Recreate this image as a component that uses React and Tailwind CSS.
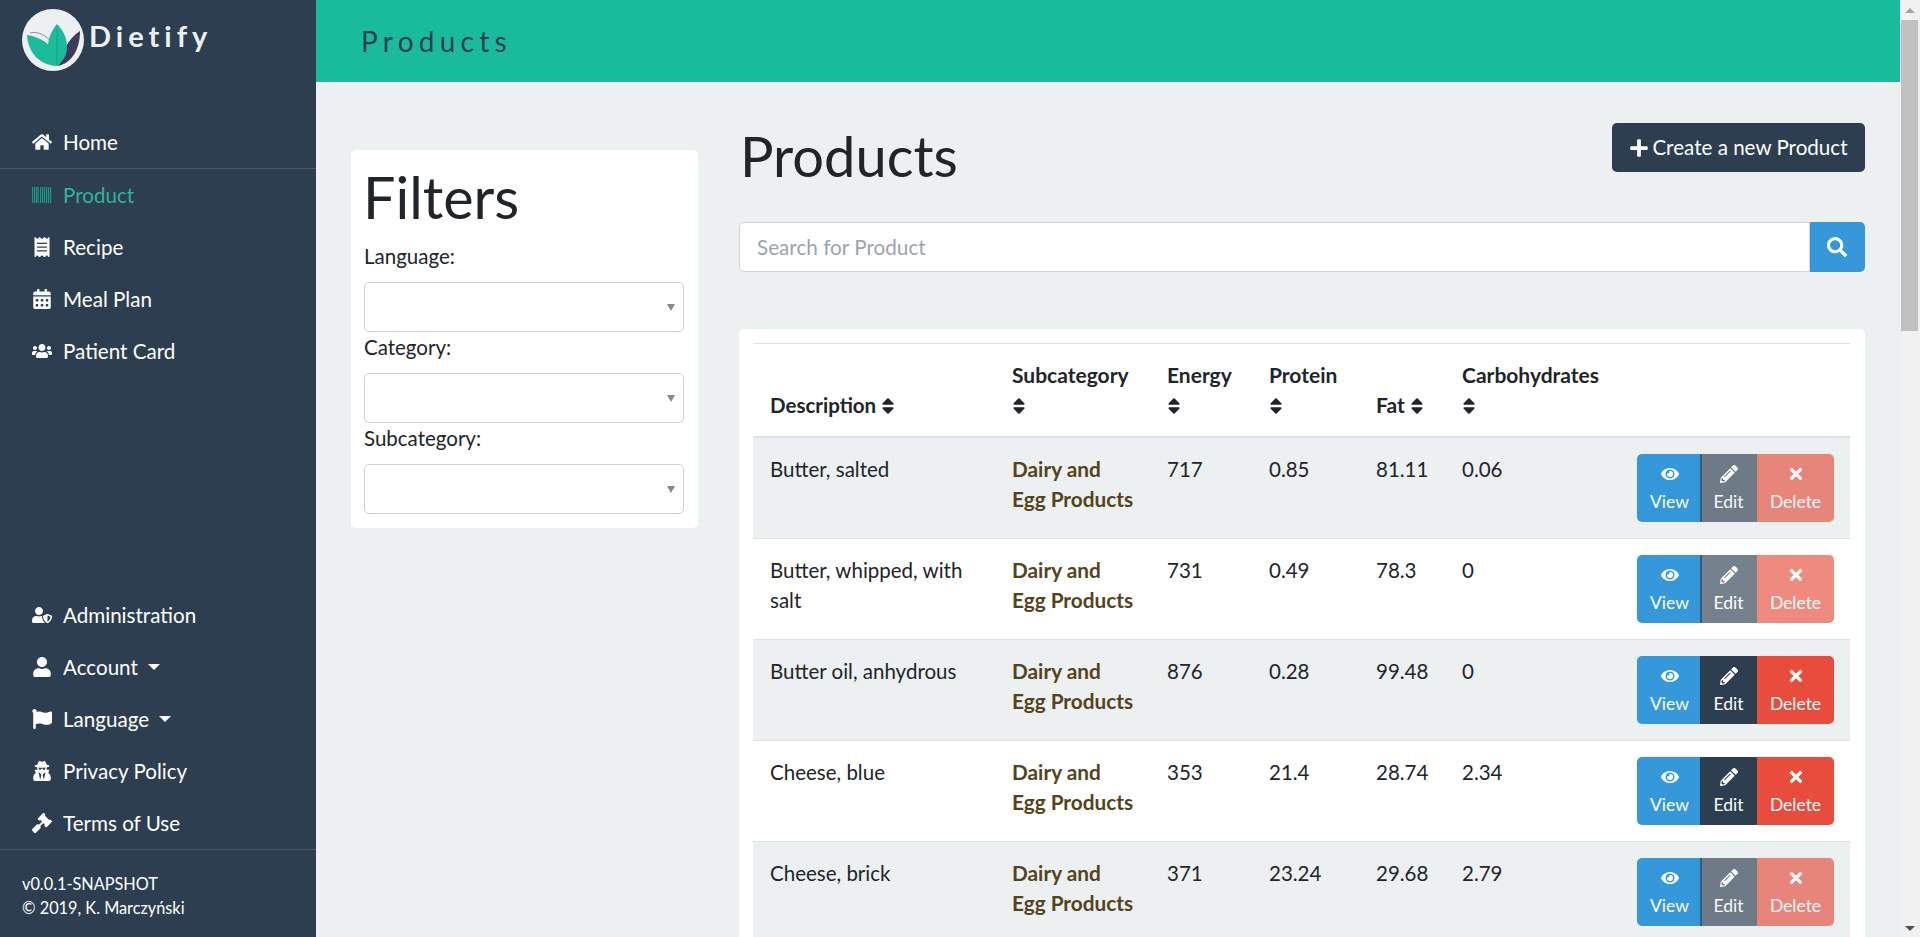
import {
  FaHome, FaReceipt, FaCalendarAlt, FaUsers, FaUserShield, FaUser, FaFlag, FaUserSecret, FaGavel,
  FaPlus, FaSearch, FaEye, FaPencilAlt, FaTimes, FaSort,
} from "react-icons/fa";

const rows = [
  { name: "Butter, salted", energy: "717", protein: "0.85", fat: "81.11", carbs: "0.06", disabled: true },
  { name: "Butter, whipped, with salt", energy: "731", protein: "0.49", fat: "78.3", carbs: "0", disabled: true },
  { name: "Butter oil, anhydrous", energy: "876", protein: "0.28", fat: "99.48", carbs: "0", disabled: false },
  { name: "Cheese, blue", energy: "353", protein: "21.4", fat: "28.74", carbs: "2.34", disabled: false },
  { name: "Cheese, brick", energy: "371", protein: "23.24", fat: "29.68", carbs: "2.79", disabled: true },
];

function Logo() {
  return (
    <svg viewBox="0 0 62 62" className="w-[62px] h-[62px] shrink-0">
      <circle cx="31" cy="31" r="31" fill="#ecf0f1" />
      <path d="M58 22C58 40 50 54 36 57C42 40 46 30 58 22Z" fill="#3e3a58" />
      <path d="M8 24C16 22 24 26 30 34" fill="none" stroke="#7a7a80" strokeWidth="0.8" />
      <path d="M5 26C14 27 24 32 28 38L34 57C18 56 6 44 5 26Z" fill="#1abc9c" />
      <path d="M35 15C42 22 45 30 45 38C45 47 40 53 35 57C29 53 26 46 26 37C26 29 30 21 35 15Z" fill="#1abc9c" />
      <path d="M35 20V57" stroke="#129a80" strokeWidth="0.8" />
    </svg>
  );
}

function Stripes() {
  const bars = [0, 2, 4, 5.5, 8, 10, 12, 14, 16, 18];
  return (
    <svg viewBox="0 0 20 16" className="w-5 h-4 opacity-70">
      {bars.map((x) => (
        <rect key={x} x={x} y="0" width="1.2" height="16" fill="#18bc9c" />
      ))}
    </svg>
  );
}

function NavItem({ icon: Icon, children, caret, active }) {
  return (
    <a className={`flex items-center h-[52px] pl-8 text-[20.6px] ${active ? "text-[#2fb49a]" : "text-white"}`}>
      <span className="w-[31px] shrink-0">{Icon ? <Icon className="h-5 w-auto" /> : <Stripes />}</span>
      <span>{children}</span>
      {caret && <span className="ml-[10px] w-0 h-0 border-x-[6px] border-x-transparent border-t-[6px] border-t-white" />}
    </a>
  );
}

function Sidebar() {
  return (
    <aside className="w-[316px] shrink-0 h-full bg-[#2c3e50] flex flex-col">
      <div className="h-[116px] pl-[22px] pt-[9px] flex items-start">
        <Logo />
        <span className="ml-[5px] mt-[9px] text-[29px] leading-[36px] font-bold tracking-[5px] text-[#ecf0f1]">Dietify</span>
      </div>
      <nav>
        <div className="border-b border-white/15">
          <NavItem icon={FaHome}>Home</NavItem>
        </div>
        <NavItem active>Product</NavItem>
        <NavItem icon={FaReceipt}>Recipe</NavItem>
        <NavItem icon={FaCalendarAlt}>Meal Plan</NavItem>
        <NavItem icon={FaUsers}>Patient Card</NavItem>
      </nav>
      <nav className="mt-auto border-b border-white/15">
        <NavItem icon={FaUserShield}>Administration</NavItem>
        <NavItem icon={FaUser} caret>Account</NavItem>
        <NavItem icon={FaFlag} caret>Language</NavItem>
        <NavItem icon={FaUserSecret}>Privacy Policy</NavItem>
        <NavItem icon={FaGavel}>Terms of Use</NavItem>
      </nav>
      <div className="h-[87px] pl-[22px] pt-[22px] text-[16.3px] leading-6 text-white">
        <div>v0.0.1-SNAPSHOT</div>
        <div>© 2019, K. Marczyński</div>
      </div>
    </aside>
  );
}

function FilterSelect({ label }) {
  return (
    <div>
      <label className="block h-[41px] leading-[30px]">{label}</label>
      <div className="h-[50px] border border-[#ced4da] rounded-[5px] bg-white flex items-center justify-end pr-[8px]">
        <span className="w-0 h-0 border-x-[4px] border-x-transparent border-t-[7px] border-t-[#888]" />
      </div>
    </div>
  );
}

function Filters() {
  return (
    <div className="w-[347px] shrink-0 mt-[68px] self-start bg-white rounded-[5px] pl-[13px] pr-[14px] pb-[14px] pt-[13px]">
      <h2 className="text-[57.5px] leading-[67px] mb-[11px] -ml-px">Filters</h2>
      <FilterSelect label="Language:" />
      <FilterSelect label="Category:" />
      <FilterSelect label="Subcategory:" />
    </div>
  );
}

function ActionButtons({ disabled }) {
  const dim = disabled ? "opacity-65" : "";
  const cell = "flex flex-col items-center pt-[11px] h-[68px] text-[17.5px] leading-[26px] text-white";
  return (
    <div className="flex justify-end">
      <a className={`${cell} w-[65px] bg-[#3498db] rounded-l-[5px]`}>
        <FaEye className="h-[18px] w-auto" />
        <span className="mt-[6px]">View</span>
      </a>
      <a className={`${cell} w-[57px] -ml-[2px] bg-[#2c3e50] ${dim}`}>
        <FaPencilAlt className="h-[18px] w-auto" />
        <span className="mt-[6px]">Edit</span>
      </a>
      <a className={`${cell} w-[77px] bg-[#e74c3c] rounded-r-[5px] ${dim}`}>
        <FaTimes className="h-[18px] w-auto" />
        <span className="mt-[6px]">Delete</span>
      </a>
    </div>
  );
}

function SortHead({ children, className = "text-[21px] px-4" }) {
  return (
    <th className={`py-4 align-bottom text-left font-bold border-t border-b-2 border-[#dee2e6] ${className}`}>
      {children} <FaSort className="inline h-5 w-auto align-[-3px] -ml-[3px]" />
    </th>
  );
}

function ProductTable() {
  return (
    <div className="mt-[57px] bg-white rounded-[5px] pl-[14px] pr-[15px] pt-[14px]">
      <table className="w-full table-fixed border-separate border-spacing-0 leading-[30px]">
        <colgroup>
          <col className="w-[243px]" />
          <col className="w-[155px]" />
          <col className="w-[102px]" />
          <col className="w-[107px]" />
          <col className="w-[86px]" />
          <col className="w-[175px]" />
          <col />
        </colgroup>
        <thead>
          <tr>
            <SortHead className="text-[20.5px] pl-[17px] pr-4">Description</SortHead>
            <SortHead>Subcategory</SortHead>
            <SortHead>Energy</SortHead>
            <SortHead>Protein</SortHead>
            <SortHead>Fat</SortHead>
            <SortHead>Carbohydrates</SortHead>
            <th className="border-t border-b-2 border-[#dee2e6]" />
          </tr>
        </thead>
        <tbody>
          {rows.map((row, i) => (
            <tr key={row.name} className={i % 2 === 0 ? "bg-[#ecf0f1]" : ""}>
              <td className="pl-[17px] pr-4 py-4 align-top border-b border-[#dee2e6]">{row.name}</td>
              <td className="px-4 py-4 align-top border-b border-[#dee2e6] text-[20.8px] font-bold text-[#54441a]">
                Dairy and<br />Egg Products
              </td>
              <td className="px-4 py-4 align-top border-b border-[#dee2e6]">{row.energy}</td>
              <td className="px-4 py-4 align-top border-b border-[#dee2e6]">{row.protein}</td>
              <td className="px-4 py-4 align-top border-b border-[#dee2e6]">{row.fat}</td>
              <td className="px-4 py-4 align-top border-b border-[#dee2e6]">{row.carbs}</td>
              <td className="px-4 py-4 align-top border-b border-[#dee2e6]">
                <ActionButtons disabled={row.disabled} />
              </td>
            </tr>
          ))}
        </tbody>
      </table>
    </div>
  );
}

function ProductsPanel() {
  return (
    <div className="w-[1126px] shrink-0 ml-[41px] pt-[41px]">
      <div className="flex items-start justify-between">
        <h1 className="text-[56px] leading-[65px] pl-[1px]">Products</h1>
        <button className="h-[49px] w-[253px] bg-[#2c3e50] rounded-[5px] text-white text-[20.6px] flex items-center justify-center gap-[3px]">
          <FaPlus className="h-5 w-auto" />
          <span className="pb-[1px]">Create a new Product</span>
        </button>
      </div>
      <div className="mt-[34px] flex h-[50px]">
        <input
          placeholder="Search for Product"
          className="flex-1 px-[17px] pt-[1px] border border-[#ced4da] rounded-l-[5px] bg-white text-[20.7px] placeholder:text-[#9aa5ad] outline-none"
        />
        <button className="w-[55px] bg-[#3498db] rounded-r-[5px] text-white flex items-center justify-center pr-[2px]">
          <FaSearch className="h-5 w-auto" />
        </button>
      </div>
      <ProductTable />
    </div>
  );
}

function FakeScrollbar() {
  return (
    <div className="w-5 shrink-0 h-full bg-[#f1f1f1] flex flex-col pl-px pr-[2px]">
      <div className="h-5 shrink-0 flex items-center justify-center">
        <span className="w-0 h-0 border-x-[5px] border-x-transparent border-b-[5px] border-b-[#a3a3a3]" />
      </div>
      <div className="h-[311px] shrink-0 bg-[#c1c1c1]" />
      <div className="mt-auto h-[17px] shrink-0 flex items-center justify-center">
        <span className="w-0 h-0 border-x-[5px] border-x-transparent border-t-[5px] border-t-[#505050]" />
      </div>
    </div>
  );
}

export default function App() {
  return (
    <div className="flex h-[937px] overflow-hidden bg-[#ecf0f1] text-[#212529] text-[20.5px] font-[family-name:Lato,sans-serif]">
      <Sidebar />
      <div className="flex-1 min-w-0 h-full flex flex-col">
        <header className="h-[82px] shrink-0 bg-[#18bc9c] flex items-center pl-[45px]">
          <span className="text-[28px] tracking-[5.25px] text-[#2c3e50]">Products</span>
        </header>
        <main className="flex-1 min-h-0 overflow-hidden flex pl-[35px]">
          <Filters />
          <ProductsPanel />
        </main>
      </div>
      <FakeScrollbar />
    </div>
  );
}
